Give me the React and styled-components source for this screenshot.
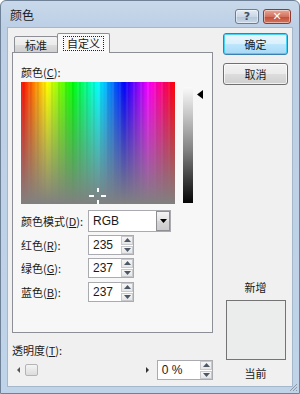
import React from "react"
import styled, { createGlobalStyle } from "styled-components"

const GlobalStyle = createGlobalStyle`
  html, body {
    margin: 0;
    padding: 0;
    background: #fff;
  }
  body {
    font-family: "Noto Sans CJK SC", "Noto Sans", sans-serif;
    font-size: 11px;
    color: #1a1a1a;
  }
`

const Window = styled.div`
  width: 300px;
  height: 394px;
  box-sizing: border-box;
  display: flex;
  flex-direction: column;
  background: linear-gradient(#c9d9eb, #bccfe5 26px, #bfd3e9);
  border: 1px solid #6e8197;
  border-radius: 6px 6px 0 0;
  padding: 0 6px 6px;
  position: relative;
`

const TitleBar = styled.div`
  height: 26px;
  display: flex;
  align-items: flex-start;
  padding: 0 2px 0 3px;
`

const Title = styled.span`
  line-height: 28px;
  font-size: 12px;
  color: #1b1b1b;
`

const CaptionButtons = styled.div`
  margin-left: auto;
  margin-top: 8px;
  display: flex;
  gap: 4px;
`

const CaptionButton = styled.div`
  width: ${({ wide }) => (wide ? 28 : 24)}px;
  height: 15px;
  box-sizing: border-box;
  border: 1px solid ${({ close }) => (close ? "#8a3b32" : "#6d7c8e")};
  border-radius: 3px;
  display: flex;
  align-items: center;
  justify-content: center;
  font: bold 11px "DejaVu Sans", sans-serif;
  color: ${({ close }) => (close ? "#fff" : "#44505e")};
  background: ${({ close }) =>
    close
      ? "linear-gradient(#e8a797, #d2725f 50%, #c24b37 51%, #d3755e)"
      : "linear-gradient(#e3ecf5, #c9d7e6 50%, #b4c6da 51%, #c9d8e8)"};
  box-shadow: inset 0 0 0 1px rgba(255, 255, 255, 0.45);
`

const Client = styled.div`
  flex: 1;
  display: flex;
  gap: 10px;
  background: #f0f0f0;
  border: 1px solid #a5b7ca;
  padding: 5px 5px 5px 4px;
`

const LeftColumn = styled.div`
  width: 201px;
  display: flex;
  flex-direction: column;
`

const TabRow = styled.div`
  display: flex;
  align-items: flex-end;
  height: 20px;
  margin-bottom: -1px;
  padding-left: 2px;
  position: relative;
  z-index: 1;
`

const Tab = styled.div`
  box-sizing: border-box;
  height: ${({ active }) => (active ? 20 : 17)}px;
  width: ${({ active }) => (active ? 53 : 44)}px;
  margin-left: ${({ active }) => (active ? -1 : 0)}px;
  display: flex;
  align-items: center;
  justify-content: center;
  border: 1px solid #8c8f96;
  border-bottom: ${({ active }) => (active ? "none" : "1px solid #8c8f96")};
  border-radius: 2px 2px 0 0;
  background: ${({ active }) =>
    active ? "#f9f9f9" : "linear-gradient(#f3f3f3, #ebebeb 50%, #dddddd 51%, #cfcfcf)"};
`

const FocusText = styled.span`
  outline: 1px dotted #222;
  outline-offset: 0;
  line-height: 13px;
  padding: 0 3px;
`

const Panel = styled.div`
  height: 281px;
  box-sizing: border-box;
  border: 1px solid #8c8f96;
  background: #f7f7f7;
  padding: 11px 0 0 8px;
  display: flex;
  flex-direction: column;
`

const Label = styled.div`
  line-height: 16px;
  width: ${({ w }) => (w ? `${w}px` : "auto")};
  flex-shrink: 0;
  white-space: nowrap;
`

const PickerRow = styled.div`
  display: flex;
  margin-top: 2px;
`

const Spectrum = styled.div`
  width: 154px;
  height: 122px;
  position: relative;
  background:
    linear-gradient(rgba(128, 128, 128, 0), rgba(128, 128, 128, 1)),
    repeating-linear-gradient(90deg, rgba(255,255,255,0.06) 0 2px, rgba(0,0,0,0.05) 2px 4px, rgba(255,255,255,0) 4px 7px),
    linear-gradient(90deg, #ff0000, #ffff00 17%, #00ff00 33%, #00ffff 50%, #0000ff 67%, #ff00ff 83%, #ff0000);
`

const Crosshair = styled.svg`
  position: absolute;
  left: 68px;
  top: 106px;
`

const LumBar = styled.div`
  margin: 5px 0 0 8px;
  width: 10px;
  height: 116px;
  background: linear-gradient(#fafafa, #c4c4c4 25%, #808080 55%, #3a3a3a 80%, #050505);
`

const LumArrow = styled.svg`
  margin: 8px 0 0 4px;
`

const FieldRow = styled.div`
  display: flex;
  align-items: center;
  margin-top: ${({ gap }) => gap}px;
`

const Combo = styled.div`
  width: 83px;
  height: 22px;
  box-sizing: border-box;
  border: 1px solid #a9abb0;
  background: #fff;
  display: flex;
  align-items: center;
  padding-left: 4px;
  font-family: "Liberation Sans", "Noto Sans CJK SC", sans-serif;
  font-size: 12px;
`

const DropButton = styled.div`
  margin-left: auto;
  width: 14px;
  height: 20px;
  box-sizing: border-box;
  border: 1px solid #8d8f94;
  background: linear-gradient(#f4f4f4, #e2e2e2 50%, #d6d6d6 51%, #cbcbcb);
  display: flex;
  align-items: center;
  justify-content: center;
`

const SpinBox = styled.div`
  width: ${({ w }) => w}px;
  height: 20px;
  box-sizing: border-box;
  border: 1px solid #a9abb0;
  background: #fff;
  display: flex;
  align-items: center;
  padding-left: 4px;
  font-family: "Liberation Sans", sans-serif;
  font-size: 12px;
`

const Spinner = styled.div`
  margin-left: auto;
  width: 12px;
  height: 18px;
  display: flex;
  flex-direction: column;
  gap: 1px;
`

const SpinHalf = styled.div`
  flex: 1;
  box-sizing: border-box;
  border: 1px solid #c8c9cc;
  background: linear-gradient(#f6f6f6, #e6e6e6);
  display: flex;
  align-items: center;
  justify-content: center;
`

const TransLabel = styled(Label)`
  margin-top: 9px;
`

const SliderRow = styled.div`
  display: flex;
  align-items: center;
  gap: 8px;
  margin-top: 2px;
  height: 20px;
`

const Slider = styled.div`
  width: 134px;
  margin-left: 5px;
  display: flex;
  align-items: center;
  height: 14px;
`

const Thumb = styled.div`
  width: 13px;
  height: 12px;
  box-sizing: border-box;
  margin-left: 5px;
  border: 1px solid #b4b4b4;
  border-radius: 2px;
  background: linear-gradient(#f4f4f4, #dcdcdc);
`

const RightColumn = styled.div`
  width: 65px;
  display: flex;
  flex-direction: column;
  align-items: center;
`

const Button = styled.div`
  width: 65px;
  height: 22px;
  box-sizing: border-box;
  margin-bottom: 8px;
  border: 1px solid ${({ primary }) => (primary ? "#3c7fb1" : "#707070")};
  border-radius: 3px;
  display: flex;
  align-items: center;
  justify-content: center;
  background: ${({ primary }) =>
    primary
      ? "linear-gradient(#eaf6fd, #d9f0fc 50%, #bee6fd 51%, #a7d9f5)"
      : "linear-gradient(#f2f2f2, #ebebeb 50%, #dddddd 51%, #cfcfcf)"};
  box-shadow: ${({ primary }) =>
    primary ? "inset 0 0 0 1px #48d3f6" : "inset 0 0 0 1px rgba(255,255,255,0.7)"};
`

const PreviewGroup = styled.div`
  margin-top: auto;
  display: flex;
  flex-direction: column;
  align-items: center;
  gap: 5px;
`

const Preview = styled.div`
  width: 60px;
  height: 60px;
  box-sizing: border-box;
  border: 1px solid #747474;
  background: rgb(235, 237, 237);
`

const Grip = styled.svg`
  position: absolute;
  right: 1px;
  bottom: 1px;
`

const Up = () => (
  <svg width="7" height="4" viewBox="0 0 7 4">
    <path d="M0 4 L3.5 0 L7 4 Z" fill="#4d5866" />
  </svg>
)

const Down = () => (
  <svg width="7" height="4" viewBox="0 0 7 4">
    <path d="M0 0 L3.5 4 L7 0 Z" fill="#4d5866" />
  </svg>
)

const NumberField = ({ value, w = 46 }) => (
  <SpinBox w={w}>
    {value}
    <Spinner>
      <SpinHalf><Up /></SpinHalf>
      <SpinHalf><Down /></SpinHalf>
    </Spinner>
  </SpinBox>
)

const channels = [
  { name: "红色", key: "R", value: 235 },
  { name: "绿色", key: "G", value: 237 },
  { name: "蓝色", key: "B", value: 237 },
]

const App = () => (
  <>
    <GlobalStyle />
    <Window>
      <TitleBar>
        <Title>颜色</Title>
        <CaptionButtons>
          <CaptionButton>?</CaptionButton>
          <CaptionButton wide close>✕</CaptionButton>
        </CaptionButtons>
      </TitleBar>
      <Client>
        <LeftColumn>
          <TabRow>
            <Tab>标准</Tab>
            <Tab active>
              <FocusText>自定义</FocusText>
            </Tab>
          </TabRow>
          <Panel>
            <Label>颜色(<u>C</u>):</Label>
            <PickerRow>
              <Spectrum>
                <Crosshair width="18" height="17" viewBox="0 0 18 17">
                  <rect x="0" y="7" width="5" height="2" fill="#fff" />
                  <rect x="12" y="7" width="5" height="2" fill="#fff" />
                  <rect x="8" y="0" width="2" height="4" fill="#fff" />
                  <rect x="8" y="12" width="2" height="4" fill="#fff" />
                </Crosshair>
              </Spectrum>
              <LumBar />
              <LumArrow width="6" height="9" viewBox="0 0 6 9">
                <path d="M6 0 L0 4.5 L6 9 Z" fill="#000" />
              </LumArrow>
            </PickerRow>
            <FieldRow gap={6}>
              <Label w={67}>颜色模式(<u>D</u>):</Label>
              <Combo>
                RGB
                <DropButton>
                  <svg width="7" height="4" viewBox="0 0 7 4">
                    <path d="M0 0 L3.5 4 L7 0 Z" fill="#000" />
                  </svg>
                </DropButton>
              </Combo>
            </FieldRow>
            {channels.map((c, i) => (
              <FieldRow gap={i === 2 ? 4 : 3} key={c.key}>
                <Label w={67}>{c.name}(<u>{c.key}</u>):</Label>
                <NumberField value={c.value} />
              </FieldRow>
            ))}
          </Panel>
          <TransLabel>透明度(<u>T</u>):</TransLabel>
          <SliderRow>
            <Slider>
              <svg width="3" height="6" viewBox="0 0 3 6">
                <path d="M3 0 L0 3 L3 6 Z" fill="#555" />
              </svg>
              <Thumb />
              <svg width="3" height="6" viewBox="0 0 3 6" style={{ marginLeft: "auto" }}>
                <path d="M0 0 L3 3 L0 6 Z" fill="#333" />
              </svg>
            </Slider>
            <NumberField value="0 %" w={57} />
          </SliderRow>
        </LeftColumn>
        <RightColumn>
          <Button primary>确定</Button>
          <Button>取消</Button>
          <PreviewGroup>
            <Label>新增</Label>
            <Preview />
            <Label>当前</Label>
          </PreviewGroup>
        </RightColumn>
      </Client>
      <Grip width="10" height="10" viewBox="0 0 10 10">
        <path d="M9 2 L2 9 M9 5 L5 9 M9 8 L8 9" stroke="#8d9aa8" strokeWidth="1" />
      </Grip>
    </Window>
  </>
)

export default App
